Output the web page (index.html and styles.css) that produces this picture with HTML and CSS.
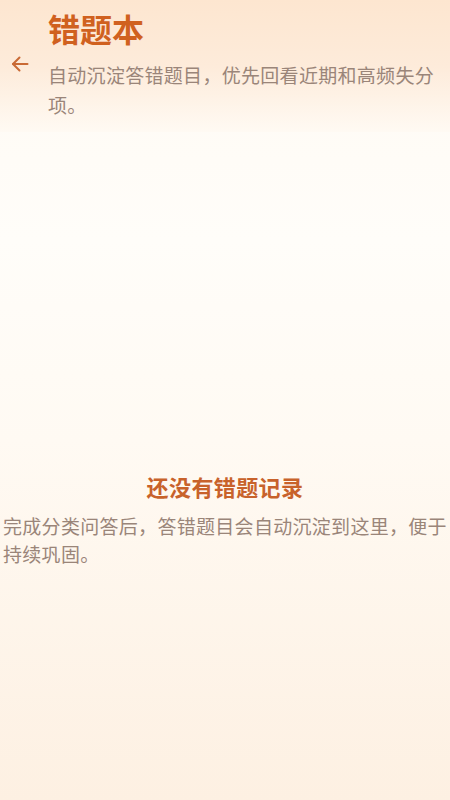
FILE: index.html
```html
<!DOCTYPE html>
<html lang="zh-CN">
<head>
<meta charset="utf-8">
<meta name="viewport" content="width=device-width, initial-scale=1">
<title>错题本</title>
<link rel="stylesheet" href="styles.css">
</head>
<body>
<div class="page">
  <header class="header">
    <button class="back" aria-label="返回">
      <svg width="20" height="20" viewBox="0 0 20 20" fill="none" stroke="currentColor" stroke-width="2" stroke-linecap="round" stroke-linejoin="round">
        <path d="M17.5 10H3"/>
        <path d="M9.5 3.5L3 10l6.5 6.5"/>
      </svg>
    </button>
    <div class="head-text">
      <h1 class="title">错题本</h1>
      <p class="subtitle">自动沉淀答错题目，优先回看近期和高频失分项。</p>
    </div>
  </header>
  <main class="main">
    <section class="empty">
      <h2 class="empty-title">还没有错题记录</h2>
      <p class="empty-desc">完成分类问答后，答错题目会自动沉淀到这里，便于持续巩固。</p>
    </section>
  </main>
</div>
</body>
</html>
```
FILE: styles.css
```css
* { box-sizing: border-box; }
html, body { margin: 0; padding: 0; }
body {
  font-family: "Noto Sans CJK SC", "Noto Sans", sans-serif;
  background: #fffbf5;
}
.page {
  min-height: 800px;
  display: flex;
  flex-direction: column;
  background: linear-gradient(180deg, #fffaf3 0%, #fffdf9 30%, #fffaf3 55%, #fdf0e2 100%);
}
.header {
  display: flex;
  align-items: flex-start;
  padding: 6px 12px 12px 10px;
  background: linear-gradient(180deg, #fde6d0 0%, #fdebda 50%, #fffaf3 100%);
}
.back {
  width: 20px;
  height: 20px;
  padding: 0;
  margin: 48px 18px 0 0;
  border: 0;
  background: none;
  color: #c96a35;
  display: flex;
  align-items: center;
  justify-content: center;
  flex: none;
}
.head-text { flex: 1; min-width: 0; }
.title {
  margin: 0;
  font-size: 32px;
  line-height: 44px;
  font-weight: 700;
  letter-spacing: 0;
  color: #d0611f;
}
.subtitle {
  margin: 10px 0 0;
  font-size: 19px;
  line-height: 30px;
  letter-spacing: 0.3px;
  color: #9a8579;
}
.main {
  flex: 1;
  display: flex;
  flex-direction: column;
  padding: 339px 3px 0;
}
.empty { text-align: center; }
.empty-title {
  margin: 0;
  font-size: 22px;
  line-height: 30px;
  font-weight: 700;
  letter-spacing: 0.4px;
  color: #c8622b;
}
.empty-desc {
  margin: 11px 0 0;
  text-align: left;
  font-size: 19px;
  line-height: 28px;
  letter-spacing: 0.3px;
  color: #9a8579;
}
```
